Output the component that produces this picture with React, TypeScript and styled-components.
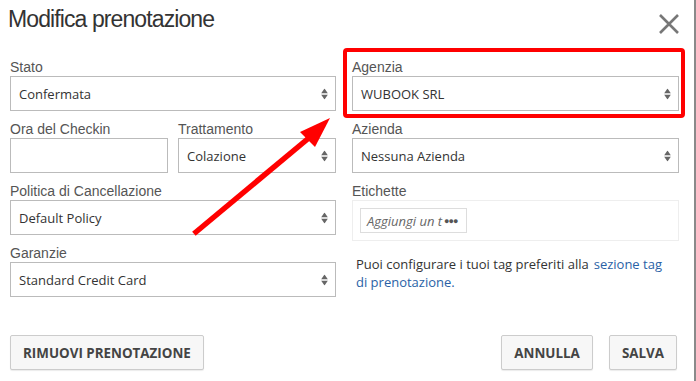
import React from "react";
import styled, { createGlobalStyle } from "styled-components";

const GlobalStyle = createGlobalStyle`
  html, body {
    margin: 0;
    padding: 0;
    background: #fff;
  }
  body {
    font-family: "Liberation Sans", Arial, sans-serif;
  }
`;

const Modal = styled.div`
  position: relative;
  width: 696px;
  height: 381px;
  box-sizing: border-box;
  padding: 0 17px 0 10px;
  background: #fff;
  overflow: hidden;
  border-right: 2px solid #8a8a8a;
`;

const Header = styled.div`
  display: flex;
  justify-content: space-between;
  align-items: flex-start;
  height: 59px;
`;

const Title = styled.h2`
  margin: 5px 0 0 -2px;
  font-family: "Liberation Sans", Arial, sans-serif;
  font-weight: 400;
  font-size: 23px;
  letter-spacing: -0.9px;
  line-height: 28px;
  color: #333;
`;

const CloseButton = styled.button`
  margin: 12px -4px 0 0;
  padding: 0;
  width: 24px;
  height: 24px;
  border: 0;
  background: none;
  display: flex;
  align-items: center;
  justify-content: center;
`;

const Grid = styled.div`
  display: grid;
  grid-template-columns: 326px 327px;
  column-gap: 16px;
`;

const Column = styled.div`
  display: flex;
  flex-direction: column;
  gap: 10px;
`;

const Pair = styled.div`
  display: grid;
  grid-template-columns: 158px 158px;
  column-gap: 10px;
`;

const Group = styled.div<{ $highlight?: boolean }>`
  position: relative;
  display: flex;
  flex-direction: column;

  ${({ $highlight }) =>
    $highlight &&
    `
    &::before {
      content: "";
      position: absolute;
      left: -9px;
      right: -6px;
      top: -11px;
      bottom: -7px;
      border: 4px solid #ff0000;
      border-radius: 4px;
      pointer-events: none;
    }
  `}
`;

const Label = styled.label`
  height: 17px;
  font-family: "Liberation Sans", Arial, sans-serif;
  font-size: 14px;
  line-height: 16px;
  color: #555;
  white-space: nowrap;
`;

const Field = styled.div`
  position: relative;
  height: 35px;
  box-sizing: border-box;
  border: 1px solid #bbb;
  background: #fff;
  display: flex;
  align-items: center;
  padding: 0 26px 0 8px;
  font-family: "Open Sans", sans-serif;
  font-size: 13px;
  color: #333;
`;

const Arrows = styled.span`
  position: absolute;
  right: 7px;
  top: 50%;
  transform: translateY(-50%);
  display: flex;
  flex-direction: column;
  gap: 1px;
`;

const TagsBox = styled.div`
  height: 41px;
  box-sizing: border-box;
  border: 1px solid #eee;
  padding: 7px 7px;
`;

const TagInput = styled.div`
  width: 107px;
  height: 25px;
  box-sizing: border-box;
  border: 1px solid #ddd;
  display: flex;
  align-items: center;
  padding-left: 6px;
  font-family: "Open Sans", sans-serif;
  font-style: italic;
  font-size: 13px;
  color: #666;
  white-space: nowrap;
  overflow: hidden;
`;

const Dots = styled.span`
  font-style: normal;
  font-size: 9px;
  letter-spacing: -1px;
  margin-left: 2px;
  color: #555;
`;

const Hint = styled.p`
  margin: 14px 14px 0 4px;
  font-family: "Open Sans", sans-serif;
  font-size: 13px;
  line-height: 18px;
  color: #333;
`;

const HintLink = styled.a`
  color: #2a62a6;
  text-decoration: none;
  margin-left: 5px;
`;

const Footer = styled.div`
  display: flex;
  justify-content: space-between;
  margin-top: 38px;
`;

const Actions = styled.div`
  display: flex;
  gap: 16px;
`;

const Button = styled.button`
  height: 35px;
  box-sizing: border-box;
  padding: 0 12px;
  border: 1px solid #ccc;
  border-radius: 2px;
  background: #f7f7f7;
  font-family: "Open Sans", sans-serif;
  font-weight: 700;
  font-size: 13.4px;
  color: #444;
  box-shadow: 0 1px 1px rgba(0, 0, 0, 0.08);
`;

const ArrowOverlay = styled.svg`
  position: absolute;
  left: 0;
  top: 0;
  pointer-events: none;
`;

const SelectArrows = () => (
  <Arrows>
    <svg width="7" height="5" viewBox="0 0 7 5">
      <path d="M3.5 0 L7 5 L0 5 Z" fill="#666" />
    </svg>
    <svg width="7" height="5" viewBox="0 0 7 5">
      <path d="M0 0 L7 0 L3.5 5 Z" fill="#666" />
    </svg>
  </Arrows>
);

const Select: React.FC<{ value: string }> = ({ value }) => (
  <Field>
    {value}
    <SelectArrows />
  </Field>
);

const App: React.FC = () => {
  return (
    <>
      <GlobalStyle />
      <Modal>
        <Header>
          <Title>Modifica prenotazione</Title>
          <CloseButton aria-label="Chiudi">
            <svg width="20" height="20" viewBox="0 0 20 20">
              <path d="M1 1 L19 19 M19 1 L1 19" stroke="#777" strokeWidth="2.6" />
            </svg>
          </CloseButton>
        </Header>

        <Grid>
          <Column>
            <Group>
              <Label>Stato</Label>
              <Select value="Confermata" />
            </Group>
            <Pair>
              <Group>
                <Label>Ora del Checkin</Label>
                <Field />
              </Group>
              <Group>
                <Label>Trattamento</Label>
                <Select value="Colazione" />
              </Group>
            </Pair>
            <Group>
              <Label>Politica di Cancellazione</Label>
              <Select value="Default Policy" />
            </Group>
            <Group>
              <Label>Garanzie</Label>
              <Select value="Standard Credit Card" />
            </Group>
          </Column>

          <Column>
            <Group $highlight>
              <Label>Agenzia</Label>
              <Select value="WUBOOK SRL" />
            </Group>
            <Group>
              <Label>Azienda</Label>
              <Select value="Nessuna Azienda" />
            </Group>
            <Group>
              <Label>Etichette</Label>
              <TagsBox>
                <TagInput>
                  Aggiungi un t<Dots>●●●</Dots>
                </TagInput>
              </TagsBox>
              <Hint>
                Puoi configurare i tuoi tag preferiti alla
                <HintLink href="#">sezione tag di prenotazione.</HintLink>
              </Hint>
            </Group>
          </Column>
        </Grid>

        <Footer>
          <Button>RIMUOVI PRENOTAZIONE</Button>
          <Actions>
            <Button>ANNULLA</Button>
            <Button>SALVA</Button>
          </Actions>
        </Footer>

        <ArrowOverlay width="696" height="381" viewBox="0 0 696 381">
          <path d="M196 232 L310 137" stroke="#ff0000" strokeWidth="5.5" strokeLinecap="square" />
          <path d="M300 132 L330 118 L315 147 Z" fill="#ff0000" />
        </ArrowOverlay>
      </Modal>
    </>
  );
};

export default App;
